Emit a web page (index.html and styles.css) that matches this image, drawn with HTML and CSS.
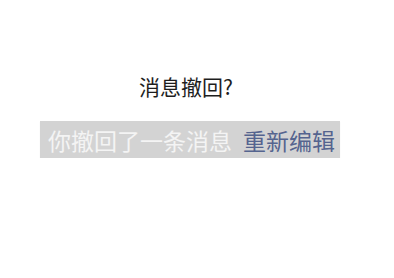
FILE: index.html
```html
<!DOCTYPE html>
<html lang="zh-CN">
<head>
  <meta charset="UTF-8" />
  <meta name="viewport" content="width=device-width, initial-scale=1.0"/>
  <title>消息撤回</title>
  <link rel="stylesheet" href="styles.css">
</head>
<body>
  <div class="page">
    <h1 class="title">消息撤回?</h1>
    <div class="notice">
      <span class="recalled">你撤回了一条消息</span>
      <span class="reedit">重新编辑</span>
    </div>
  </div>
</body>
</html>
```
FILE: styles.css
```css
body {
  margin: 0;
  background: #fff;
  font-family: "Noto Sans CJK SC", "Noto Sans", sans-serif;
}
.page {
  padding-top: 72px;
  display: flex;
  flex-direction: column;
  align-items: flex-start;
}
.title {
  margin: 0 0 0 139px;
  font-size: 21px;
  font-weight: normal;
  color: #1e1e1e;
  line-height: 28px;
}
.notice {
  margin: 21px 0 0 40px;
  width: 300px;
  height: 37px;
  background: #d3d3d3;
  display: flex;
  align-items: center;
  padding-left: 8px;
  box-sizing: border-box;
  font-size: 23px;
  box-shadow: 0 1px 1px #ececec;
}
.recalled {
  color: #f4f4f4;
}
.reedit {
  color: #55648f;
  margin-left: 11px;
}
```
